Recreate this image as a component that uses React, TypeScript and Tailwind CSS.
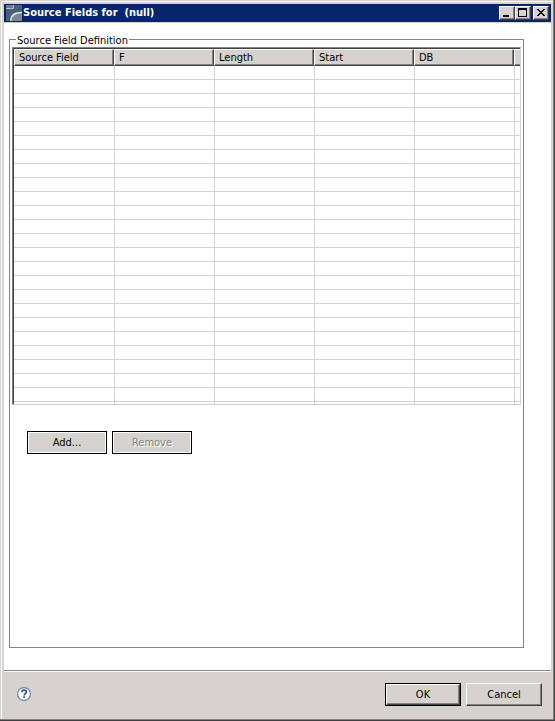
import type { ReactNode } from 'react';

const COLUMNS = ['Source Field', 'F', 'Length', 'Start', 'DB', ''];
const EMPTY_ROWS = 24;

interface CaptionButtonProps {
  label: string;
  children: ReactNode;
}

function CaptionButton({ label, children }: CaptionButtonProps) {
  return (
    <button
      type="button"
      aria-label={label}
      className="h-[14px] w-4 border border-t-white border-r-[#424142] border-b-[#424142] border-l-white bg-[#d6d3ce] shadow-[inset_-1px_-1px_0_#848284]"
    >
      <svg viewBox="0 0 14 12" className="block h-3 w-[14px]" shapeRendering="crispEdges" aria-hidden="true">
        {children}
      </svg>
    </button>
  );
}

function AppIcon() {
  return (
    <svg viewBox="0 0 16 16" className="size-4 shrink-0" aria-hidden="true">
      <rect width="16" height="16" fill="#4a5d7b" />
      <path d="M0 0h7v3H0z" fill="#6b7b94" />
      <path d="M7.500 0v3.500H0" fill="none" stroke="#b5bcc6" strokeWidth="1" />
      <path d="M5 16c0-5 3-8.500 11-8.500V16z" fill="#7b8799" />
      <path d="M4.800 16c0-5 3-8.500 11.200-8.500" fill="none" stroke="#dee3e7" strokeWidth="1.500" />
    </svg>
  );
}

function TitleBar() {
  return (
    <header className="flex h-[18px] items-center bg-[#08246b] px-0.5 text-white">
      <AppIcon />
      <h1 className="ml-px flex-1 whitespace-pre text-[11px] leading-[14px] font-bold">
        {'Source Fields for  (null)'}
      </h1>
      <div className="flex">
        <CaptionButton label="Minimize">
          <path d="M3 8h6v2H3z" />
        </CaptionButton>
        <CaptionButton label="Maximize">
          <path d="M2 1h9v9H2zM3 3v6h7V3z" fillRule="evenodd" />
        </CaptionButton>
        <span className="w-0.5" />
        <CaptionButton label="Close">
          <path d="M3 2h2v1h1v1h2V3h1V2h2v1h-1v1H9v1H8v1h1v1h1v1h1v1H9V8H8V7H6v1H5v1H3V8h1V7h1V6h1V5H5V4H4V3H3z" />
        </CaptionButton>
      </div>
    </header>
  );
}

function FieldTable() {
  return (
    <div className="border-t border-r border-b border-l border-t-[#848284] border-r-[#d6d3ce] border-b-[#d6d3ce] border-l-[#848284]">
      <div className="border-t border-l border-[#424142]">
        <table className="w-full table-fixed border-separate border-spacing-0">
          <thead>
            <tr>
              {COLUMNS.map((name, i) => (
                <th
                  key={i}
                  scope="col"
                  className="h-[17px] w-[100px] border border-t-white border-r-[#424142] border-b-[#424142] border-l-white bg-[#d6d3ce] p-0 pl-1 text-left leading-[14px] font-normal shadow-[inset_-1px_-1px_0_#848284] last:w-auto last:border-r-0 last:shadow-[inset_0_-1px_0_#848284]"
                >
                  {name}
                </th>
              ))}
            </tr>
          </thead>
          <tbody>
            {Array.from({ length: EMPTY_ROWS }, (_, row) => (
              <tr key={row}>
                {COLUMNS.map((_, i) => (
                  <td key={i} className="h-[14px] border-b border-l border-[#d6d3ce] p-0 first:border-l-0" />
                ))}
              </tr>
            ))}
            {/* the next row is cut off by the bottom edge */}
            <tr>
              {COLUMNS.map((_, i) => (
                <td key={i} className="h-0.5 border-l border-[#d6d3ce] p-0 first:border-l-0" />
              ))}
            </tr>
          </tbody>
        </table>
      </div>
    </div>
  );
}

function HelpIcon() {
  return (
    <svg viewBox="0 0 14 14" className="size-[14px]" aria-hidden="true">
      <circle cx="7" cy="7" r="6.400" fill="#fff" stroke="#637dad" strokeWidth="1.100" />
      <path
        d="M4.800 5.300c0-1.500 1-2.200 2.300-2.200s2.200.8 2.200 1.900c0 1.600-2.100 1.700-2.100 3.400"
        fill="none"
        stroke="#31498c"
        strokeWidth="1.600"
      />
      <path d="M6.300 9.400h1.800v1.600H6.300z" fill="#31498c" />
    </svg>
  );
}

export default function App() {
  return (
    <div className="flex min-h-screen flex-col border-r border-b border-[#424142] bg-[#d6d3ce] font-['DejaVu_Sans_Condensed','DejaVu_Sans',sans-serif] text-[11px] text-black">
      <div className="flex flex-1 flex-col border-r border-b border-[#848284] pt-px pl-px">
        <main className="flex flex-1 flex-col border-t border-l border-white pt-0.5 pr-0.5 pl-0.5">
          <TitleBar />
          <section className="mt-px flex flex-1 flex-col border-b border-[#848284] bg-white pt-[9px] pr-[27px] pb-[22px] pl-[5px]">
            <fieldset className="flex-1 border border-[#848284] px-0.5">
              <legend className="ml-1 px-px pt-0.5 leading-[13px]">Source Field Definition</legend>
              <FieldTable />
              <div className="mt-[26px] ml-[15px] flex gap-[5px]">
                <button
                  type="button"
                  className="h-[23px] w-20 border border-black bg-[#d6d3ce] leading-[14px] shadow-[inset_0_0_0_1px_#fff]"
                >
                  Add...
                </button>
                <button
                  type="button"
                  disabled
                  className="h-[23px] w-20 border border-black bg-[#d6d3ce] leading-[14px] text-[#848284] shadow-[inset_0_0_0_1px_#fff] [text-shadow:1px_1px_0_#fff]"
                >
                  Remove
                </button>
              </div>
            </fieldset>
          </section>
          <footer className="flex items-start border-t border-white px-[13px] pt-[11px] pb-[13px] pr-[9px]">
            <button type="button" aria-label="Help" className="mt-1">
              <HelpIcon />
            </button>
            <div className="ml-auto flex gap-[5px]">
              <button type="button" className="h-[23px] w-[76px] border border-black bg-[#d6d3ce]">
                <span className="flex h-full items-center justify-center border border-t-white border-r-[#424142] border-b-[#424142] border-l-white leading-[14px] shadow-[inset_-1px_-1px_0_#848284]">
                  OK
                </span>
              </button>
              <button
                type="button"
                className="h-[23px] w-[76px] border border-t-white border-r-[#424142] border-b-[#424142] border-l-white bg-[#d6d3ce] leading-[14px] shadow-[inset_-1px_-1px_0_#848284]"
              >
                Cancel
              </button>
            </div>
          </footer>
        </main>
      </div>
    </div>
  );
}
